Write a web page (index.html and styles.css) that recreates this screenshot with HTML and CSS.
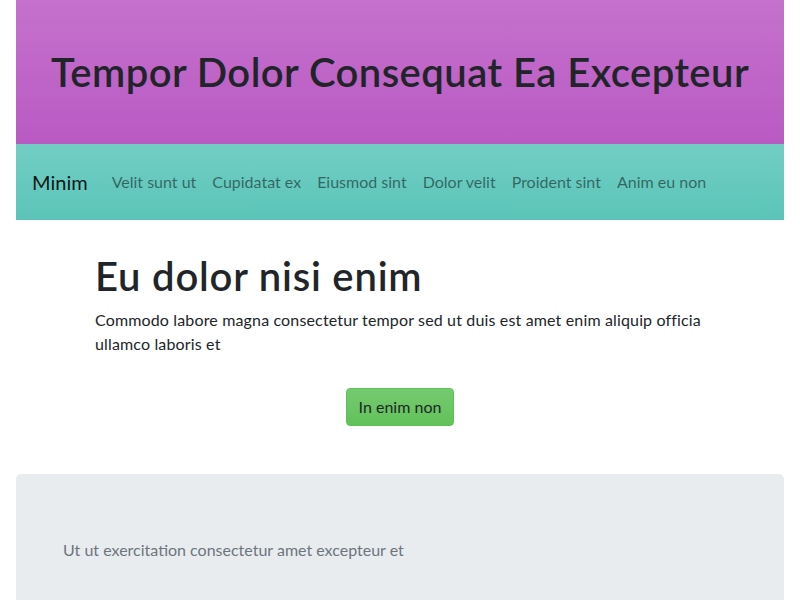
FILE: index.html
```html
<!DOCTYPE html>
<html lang="en">
<head>
<meta charset="utf-8">
<title>Tempor Dolor</title>
<link rel="stylesheet" href="styles.css">
</head>
<body>
<div class="page">
  <header class="hero">
    <h1 class="hero-title">Tempor Dolor Consequat Ea Excepteur</h1>
  </header>
  <nav class="navbar">
    <a class="brand" href="#">Minim</a>
    <ul class="nav-links">
      <li><a href="#">Velit sunt ut</a></li>
      <li><a href="#">Cupidatat ex</a></li>
      <li><a href="#">Eiusmod sint</a></li>
      <li><a href="#">Dolor velit</a></li>
      <li><a href="#">Proident sint</a></li>
      <li><a href="#">Anim eu non</a></li>
    </ul>
  </nav>
  <main class="content">
    <h1 class="content-title">Eu dolor nisi enim</h1>
    <p class="content-text">Commodo labore magna consectetur tempor sed ut duis est amet enim aliquip officia ullamco laboris et</p>
    <div class="actions">
      <button class="btn" type="button">In enim non</button>
    </div>
  </main>
  <section class="jumbotron">
    <p class="jumbo-text">Ut ut exercitation consectetur amet excepteur et</p>
  </section>
</div>
</body>
</html>
```
FILE: styles.css
```css
* { box-sizing: border-box; }
html, body { margin: 0; padding: 0; background: #fff; }
body {
  font-family: "Lato", "Noto Sans", sans-serif;
  font-size: 16px;
  line-height: 1.5;
  color: #212529;
}
.page {
  width: 768px;
  margin: 0 auto;
}
.hero {
  height: 144px;
  background: linear-gradient(to bottom, #c571cd, #b95ac3);
  display: flex;
  align-items: center;
  justify-content: center;
}
.hero-title {
  margin: 0;
  font-size: 40px;
  font-weight: 600;
  line-height: 1.2;
  color: #212529;
  letter-spacing: 0.45px;
}
.navbar {
  height: 76px;
  background: linear-gradient(to bottom, #72cec5, #5bc4b8);
  display: flex;
  align-items: center;
  padding: 0 16px;
}
.brand {
  font-size: 20px;
  line-height: 30px;
  color: rgba(0,0,0,.9);
  text-decoration: none;
  margin-right: 16px;
}
.nav-links {
  display: flex;
  list-style: none;
  margin: 0;
  padding: 0;
}
.nav-links a {
  display: block;
  padding: 8px;
  color: rgba(0,0,0,.5);
  text-decoration: none;
}
.content {
  width: 610px;
  margin: 0 auto;
  padding-top: 32px;
}
.content-title {
  margin: 0 0 8px;
  font-size: 40px;
  font-weight: 600;
  line-height: 1.2;
  letter-spacing: 0.8px;
}
.content-text {
  margin: 0 0 16px;
  letter-spacing: 0.15px;
}
.actions {
  display: flex;
  justify-content: center;
  padding-top: 16px;
  padding-bottom: 48px;
}
.btn {
  font-family: inherit;
  font-size: 16px;
  line-height: 24px;
  padding: 6px 12px;
  border: 1px solid #5fc057;
  border-radius: 4px;
  color: #212529;
  background: linear-gradient(to bottom, #75ca6f, #62c25a);
}
.jumbotron {
  background: #e9ecef;
  border-radius: 5px 5px 0 0;
  padding: 64px 47px 38px;
}
.jumbo-text {
  margin: 0;
  color: #6c757d;
}
```
